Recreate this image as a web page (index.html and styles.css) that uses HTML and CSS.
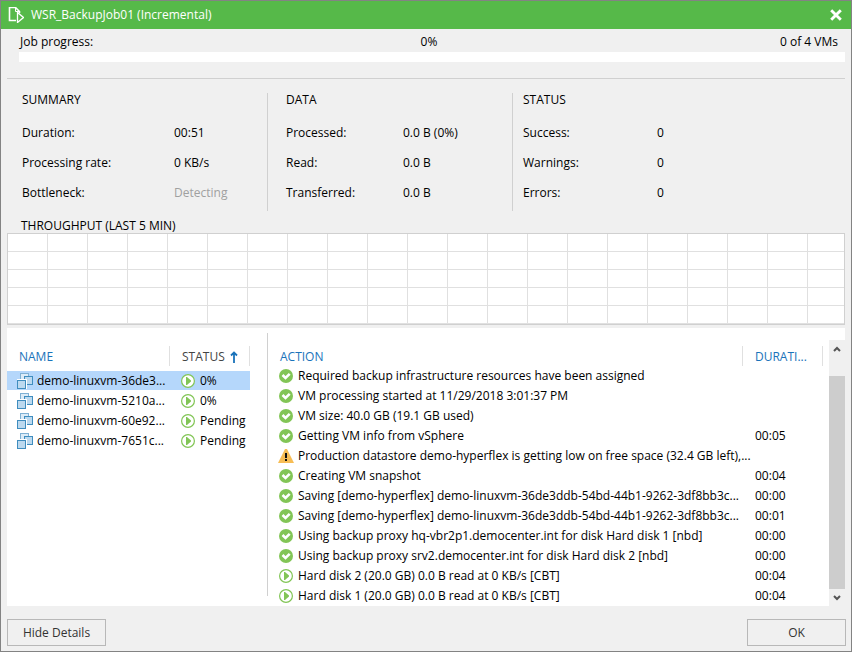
FILE: index.html
```html
<!DOCTYPE html>
<html lang="en">
<head>
<meta charset="utf-8">
<title>WSR_BackupJob01 (Incremental)</title>
<link rel="stylesheet" href="styles.css">
</head>
<body>
<svg class="sprite" aria-hidden="true">
  <symbol id="ok" viewBox="0 0 14 14">
    <circle cx="7" cy="7" r="7" fill="#82c556"/>
    <path d="M3.500 6 6.500 9 10.700 4.800" fill="none" stroke="#fff" stroke-width="2.600"/>
  </symbol>
  <symbol id="run" viewBox="0 0 14 14">
    <circle cx="7" cy="7" r="6.400" fill="#fff" stroke="#82c556" stroke-width="1.200"/>
    <path d="M5 3V11H6L10 7.500V6.500L6 3Z" fill="#82c556"/>
  </symbol>
  <symbol id="warn" viewBox="0 0 16 14">
    <path d="M7 0H9L16 14H0Z" fill="#f7bd55"/>
    <path d="M7 4H9V9H7ZM7 10H9V12H7Z" fill="#111"/>
  </symbol>
  <symbol id="vm" viewBox="0 0 16 16">
    <rect x="3.500" y=".5" width="8" height="8" fill="#dcebf7" stroke="#7fb0d3"/>
    <rect x="7.500" y="3.500" width="8" height="8" fill="#bcd9ef" stroke="#3f8dbf"/>
    <path d="M0 6H10V16H0Z" fill="#fff"/>
    <rect x=".5" y="7.500" width="8" height="8" fill="#bcd9ef" stroke="#3f8dbf"/>
  </symbol>
</svg>
<main class="window">
  <header class="titlebar">
    <svg class="job-icon" viewBox="0 0 16 16" aria-hidden="true">
      <path d="M8 13.500H1.500V.5H7.500L11.500 4.500V6" fill="none" stroke="#fff" stroke-width="1.600"/>
      <path d="M7.500 .5V4.500H11.500" fill="none" stroke="#fff"/>
      <path d="M9.500 5.500V15.500L15.500 10.500Z" fill="#58b94b" stroke="#fff" stroke-width="1.300"/>
    </svg>
    <h1>WSR_BackupJob01 (Incremental)</h1>
    <button class="close" aria-label="Close"><svg viewBox="0 0 10 10"><path d="M1 1 9 9M9 1 1 9" fill="none" stroke="#fff" stroke-width="2.400"/></svg></button>
  </header>

  <section class="progress">
    <div class="progress-text">
      <label for="job">Job progress:</label><span>0%</span><span>0 of 4 VMs</span>
    </div>
    <progress id="job" value="0" max="100"></progress>
  </section>

  <section class="stats">
    <div class="stat summary">
      <h2>SUMMARY</h2>
      <dl><dt>Duration:</dt><dd>00:51</dd><dt>Processing rate:</dt><dd>0 KB/s</dd><dt>Bottleneck:</dt><dd class="muted">Detecting</dd></dl>
    </div>
    <div class="stat data">
      <h2>DATA</h2>
      <dl><dt>Processed:</dt><dd>0.0 B (0%)</dd><dt>Read:</dt><dd>0.0 B</dd><dt>Transferred:</dt><dd>0.0 B</dd></dl>
    </div>
    <div class="stat status">
      <h2>STATUS</h2>
      <dl><dt>Success:</dt><dd>0</dd><dt>Warnings:</dt><dd>0</dd><dt>Errors:</dt><dd>0</dd></dl>
    </div>
  </section>

  <section class="throughput">
    <h2>THROUGHPUT (LAST 5 MIN)</h2>
    <div class="chart"></div>
  </section>

  <section class="details">
    <div class="vms">
      <table>
        <thead><tr><th class="name">NAME</th><th class="state sorted"><span class="cell">STATUS <svg class="sort" viewBox="0 0 8 12" aria-hidden="true"><path d="M4 12V1M1 4.500 4 1.500 7 4.500" fill="none" stroke="#1a73ba" stroke-width="1.800"/></svg></span></th></tr></thead>
        <tbody>
          <tr class="selected"><td><span class="cell"><svg class="vm"><use href="#vm"/></svg>demo-linuxvm-36de3...</span></td><td><span class="cell"><svg class="dot"><use href="#run"/></svg>0%</span></td></tr>
          <tr><td><span class="cell"><svg class="vm"><use href="#vm"/></svg>demo-linuxvm-5210a...</span></td><td><span class="cell"><svg class="dot"><use href="#run"/></svg>0%</span></td></tr>
          <tr><td><span class="cell"><svg class="vm"><use href="#vm"/></svg>demo-linuxvm-60e92...</span></td><td><span class="cell"><svg class="dot"><use href="#run"/></svg>Pending</span></td></tr>
          <tr><td><span class="cell"><svg class="vm"><use href="#vm"/></svg>demo-linuxvm-7651c...</span></td><td><span class="cell"><svg class="dot"><use href="#run"/></svg>Pending</span></td></tr>
        </tbody>
      </table>
    </div>
    <div class="actions">
      <table>
        <thead><tr><th class="action">ACTION</th><th class="duration">DURATI...</th></tr></thead>
        <tbody>
          <tr><td><span class="cell"><svg class="dot"><use href="#ok"/></svg>Required backup infrastructure resources have been assigned</span></td><td></td></tr>
          <tr><td><span class="cell"><svg class="dot"><use href="#ok"/></svg>VM processing started at 11/29/2018 3:01:37 PM</span></td><td></td></tr>
          <tr><td><span class="cell"><svg class="dot"><use href="#ok"/></svg>VM size: 40.0 GB (19.1 GB used)</span></td><td></td></tr>
          <tr><td><span class="cell"><svg class="dot"><use href="#ok"/></svg>Getting VM info from vSphere</span></td><td>00:05</td></tr>
          <tr><td><span class="cell warning"><svg class="alert"><use href="#warn"/></svg>Production datastore demo-hyperflex is getting low on free space (32.4 GB left),...</span></td><td></td></tr>
          <tr><td><span class="cell"><svg class="dot"><use href="#ok"/></svg>Creating VM snapshot</span></td><td>00:04</td></tr>
          <tr><td><span class="cell"><svg class="dot"><use href="#ok"/></svg>Saving [demo-hyperflex] demo-linuxvm-36de3ddb-54bd-44b1-9262-3df8bb3c...</span></td><td>00:00</td></tr>
          <tr><td><span class="cell"><svg class="dot"><use href="#ok"/></svg>Saving [demo-hyperflex] demo-linuxvm-36de3ddb-54bd-44b1-9262-3df8bb3c...</span></td><td>00:01</td></tr>
          <tr><td><span class="cell"><svg class="dot"><use href="#ok"/></svg>Using backup proxy hq-vbr2p1.democenter.int for disk Hard disk 1 [nbd]</span></td><td>00:00</td></tr>
          <tr><td><span class="cell"><svg class="dot"><use href="#ok"/></svg>Using backup proxy srv2.democenter.int for disk Hard disk 2 [nbd]</span></td><td>00:00</td></tr>
          <tr><td><span class="cell"><svg class="dot"><use href="#run"/></svg>Hard disk 2 (20.0 GB) 0.0 B read at 0 KB/s [CBT]</span></td><td>00:04</td></tr>
          <tr><td><span class="cell"><svg class="dot"><use href="#run"/></svg>Hard disk 1 (20.0 GB) 0.0 B read at 0 KB/s [CBT]</span></td><td>00:04</td></tr>
        </tbody>
      </table>
    </div>
    <div class="scrollbar">
      <button aria-label="Scroll up"><svg viewBox="0 0 8 6"><path d="M1 5 4 2 7 5" fill="none" stroke="#555" stroke-width="2"/></svg></button>
      <div class="thumb"></div>
      <button aria-label="Scroll down"><svg viewBox="0 0 8 6"><path d="M1 1 4 4 7 1" fill="none" stroke="#555" stroke-width="2"/></svg></button>
    </div>
  </section>

  <footer class="footer">
    <button class="btn">Hide Details</button>
    <button class="btn">OK</button>
  </footer>
</main>
</body>
</html>
```
FILE: styles.css
```css
* { box-sizing: border-box; }
body {
  margin: 0;
  font: 12px/20px "Open Sans", "Noto Sans", sans-serif;
  color: #000;
  background: #f0f0f0;
}
h1, h2, dl, dd { margin: 0; font: inherit; }
button { padding: 0; border: 0; background: none; font: inherit; }
svg { display: block; flex: none; }
.sprite { position: absolute; width: 0; height: 0; }

.window {
  display: flex;
  flex-direction: column;
  min-height: 100vh;
  border: 1px solid #838383;
}

.titlebar {
  display: flex;
  align-items: center;
  height: 28px;
  padding: 0 9px 0 7px;
  gap: 7px;
  background: #56b949;
  color: #fff;
}
.job-icon { width: 16px; height: 16px; }
.close { margin-left: auto; }
.close svg { width: 12px; height: 12px; }

.progress {
  margin: 0 6px;
  padding: 3px 0 16px 12px;
  border-bottom: 1px solid #d0d0d0;
}
.progress-text {
  display: grid;
  grid-template-columns: 1fr auto 1fr;
  padding: 0 7px 0 1px;
}
.progress-text span:last-child { text-align: right; }
.progress progress {
  display: block;
  width: 100%;
  height: 10px;
  border: 0;
  appearance: none;
  background: #fff;
}
.progress progress::-webkit-progress-bar { background: #fff; }
.progress progress::-webkit-progress-value { background: #56b949; }

.stats {
  display: grid;
  grid-template-columns: 260px 245px 1fr;
  margin: 14px 6px 7px;
}
.stat + .stat { border-left: 1px solid #d0d0d0; }
.stat { height: 118px; }
.summary { padding-left: 15px; }
.data { padding-left: 18px; }
.status { padding-left: 10px; }
.stat h2 { line-height: 14px; margin-bottom: 11px; }
.stat dl { display: grid; line-height: 30px; }
.summary dl { grid-template-columns: 152px 1fr; }
.data dl { grid-template-columns: 117px 1fr; }
.status dl { grid-template-columns: 134px 1fr; }
.muted { color: #a0a0a0; }

.throughput { margin: 0 6px 3px; }
.throughput h2 { padding-left: 14px; line-height: 15px; }
.chart {
  height: 92px;
  border: 1px solid #d0d0d0;
  background:
    repeating-linear-gradient(90deg, transparent 0 39px, #e0e0e0 39px 40px),
    repeating-linear-gradient(transparent 0 17px, #e0e0e0 17px 18px),
    #fff;
}

.details {
  flex: 1;
  display: grid;
  grid-template-columns: 260px 1fr 16px;
  margin: 0 6px;
  background: #fff;
}
table { border-collapse: separate; border-spacing: 0; table-layout: fixed; width: 100%; }
th, td { padding: 0; text-align: left; font-weight: normal; white-space: nowrap; }
th { height: 20px; padding-top: 2px; line-height: 18px; color: #1a73ba; border-right: 1px solid #e0e0e0; }
td { height: 20px; }
.cell { display: flex; align-items: center; gap: 5px; }
.dot { width: 14px; height: 14px; }
.alert { width: 16px; height: 14px; }
.warning { gap: 4px; margin-left: -1px; }

.vms { padding: 18px 17px 0 0; }
.vms th { padding-left: 12px; }
.name { width: 163px; }
.vms .sorted { color: #444; }
.sort { width: 8px; height: 12px; }
.vms tbody::before { content: ""; display: block; height: 5px; }
.vms td { padding-left: 10px; line-height: 19px; border-bottom: 1px solid transparent; background-clip: padding-box; }
.vms td + td { padding-left: 11px; }
.vms td .cell { height: 19px; gap: 4px; }
.vms td + td .cell { gap: 5px; }
.vms .vm { width: 16px; height: 16px; }
.selected td { background-color: #b5d7fb; }

.actions {
  margin: 5px 0 10px;
  padding: 13px 6px 0 11px;
  border-left: 1px solid #d0d0d0;
}
.actions table { margin-bottom: -10px; }
.actions .action { padding-left: 1px; }
.duration { width: 80px; }
.actions th.duration, .actions td:last-child { padding-left: 12px; }

.scrollbar {
  display: flex;
  flex-direction: column;
  margin-top: 12px;
  background: #f0f0f0;
}
.scrollbar button { display: grid; place-items: center; height: 17px; }
.scrollbar button:first-child { height: 18px; }
.scrollbar svg { width: 8px; height: 6px; }
.thumb { flex: 1; margin-top: 18px; background: #cdcdcd; }

.footer { display: flex; justify-content: space-between; padding: 13px 5px 5px 6px; }
.btn {
  width: 99px;
  height: 27px;
  border: 1px solid #b8b8b8;
  color: #333;
}
```
